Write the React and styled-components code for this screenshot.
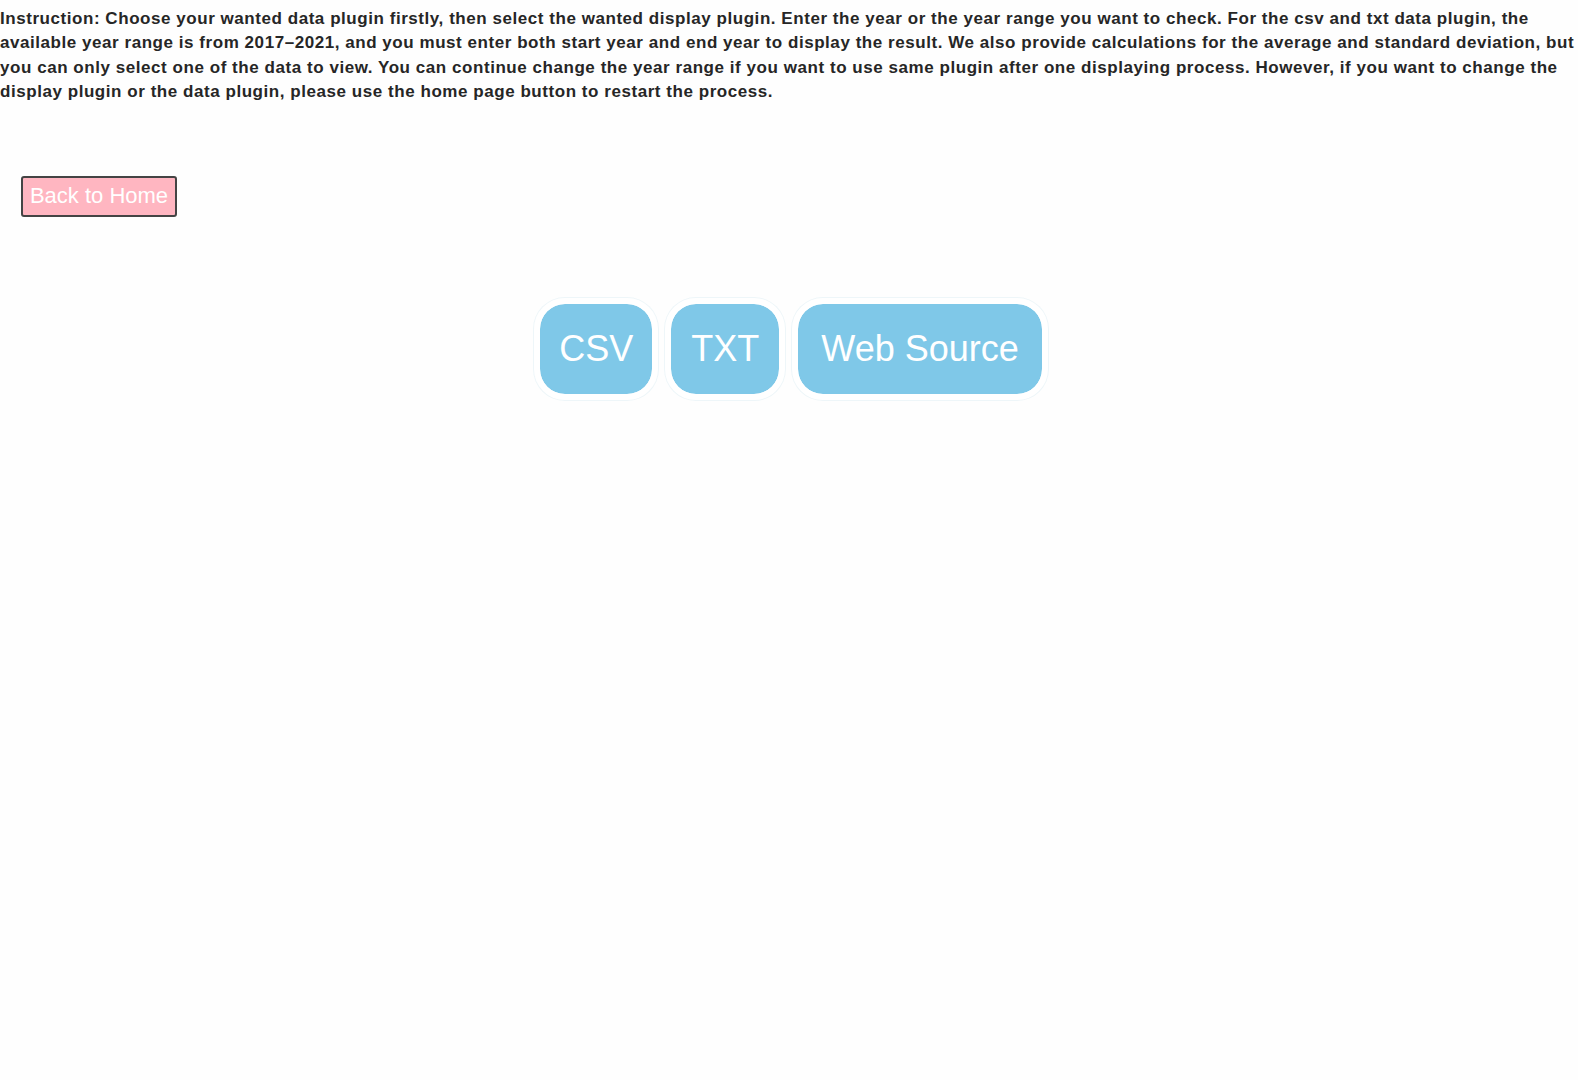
import React from "react";
import styled, { createGlobalStyle } from "styled-components";

const Global = createGlobalStyle`
  html, body { margin: 0; padding: 0; background: #fefefe; }
  body { font-family: "Liberation Sans", Arial, sans-serif; color: #111; }
`;

const Page = styled.div`
  display: flex;
  flex-direction: column;
  min-height: 1080px;
`;

const Instruction = styled.p`
  margin: 6.5px 0 0 0;
  font-size: 17px;
  font-weight: 700;
  letter-spacing: 0.55px;
  line-height: 24.6px;
  color: #262626;
`;

const HomeRow = styled.div`
  padding: 71px 0 0 21px;
`;

const HomeButton = styled.button`
  font-family: "Liberation Sans", Arial, sans-serif;
  font-size: 22px;
  color: #fff;
  background: #ffb6c1;
  border: 2px solid #444;
  border-radius: 3px;
  height: 41px;
  width: 156px;
  padding: 0;
  cursor: pointer;
`;

const PluginRow = styled.div`
  display: flex;
  justify-content: center;
  gap: 7px;
  margin-top: 81px;
  padding-left: 4px;
`;

const PluginButton = styled.button`
  font-family: "Liberation Sans", Arial, sans-serif;
  font-size: 36px;
  color: #fff;
  background: #7fc8e8;
  border: 6px solid #fff;
  box-shadow: 0 0 0 1px #eef6f9;
  border-radius: 31px;
  background-clip: padding-box;
  height: 102px;
  padding: 0 ${(p) => p.$pad}px;
  cursor: pointer;
`;

export default function App() {
  return (
    <>
      <Global />
      <Page>
        <Instruction>
          Instruction: Choose your wanted data plugin firstly, then select the wanted display plugin. Enter the year or the year range you want to check. For the csv and txt data plugin, the available year range is from 2017–2021, and you must enter both start year and end year to display the result. We also provide calculations for the average and standard deviation, but you can only select one of the data to view. You can continue change the year range if you want to use same plugin after one displaying process. However, if you want to change the display plugin or the data plugin, please use the home page button to restart the process.
        </Instruction>
        <HomeRow>
          <HomeButton>Back to Home</HomeButton>
        </HomeRow>
        <PluginRow>
          <PluginButton $pad={19}>CSV</PluginButton>
          <PluginButton $pad={20}>TXT</PluginButton>
          <PluginButton $pad={23}>Web Source</PluginButton>
        </PluginRow>
      </Page>
    </>
  );
}
